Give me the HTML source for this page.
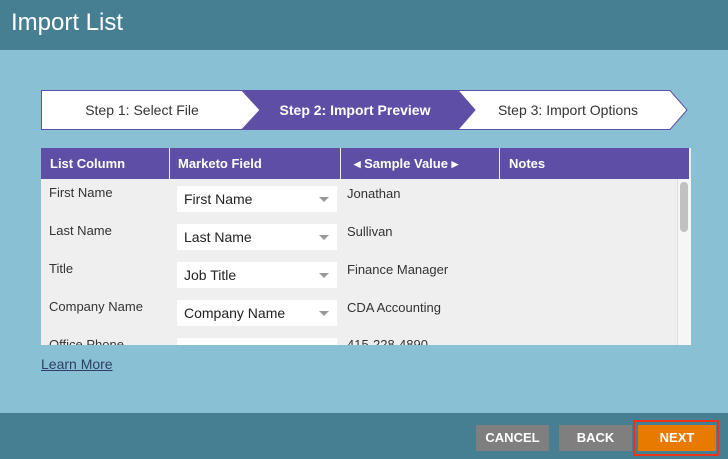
<!DOCTYPE html>
<html><head><style>
*{margin:0;padding:0;box-sizing:border-box}
body{width:728px;height:459px;background:#89c0d4;font-family:"Liberation Sans",sans-serif;position:relative;overflow:hidden}
.hdr{position:absolute;left:0;top:0;width:728px;height:50px;background:#477f92;color:#fff;font-size:24px;padding:9px 0 0 11px}
.ftr{position:absolute;left:0;top:413px;width:728px;height:46px;background:#477f92}
.tbl{position:absolute;left:41px;top:148px;width:650px;height:197px;background:#efefef;overflow:hidden}
.th{position:absolute;top:0;height:31px;background:#5e4ea6;color:#fff;font-size:13px;font-weight:bold;line-height:31px}
.cell{position:absolute;font-size:13px;color:#333}
.sel{position:absolute;left:136px;width:160px;height:26px;background:#fff;font-size:14px;color:#222;padding:5px 0 0 7px}
.sel:after{content:"";position:absolute;right:8px;top:11px;border-left:5px solid transparent;border-right:5px solid transparent;border-top:5px solid #999}
.btn{position:absolute;top:425px;height:26px;color:#fff;font-size:13px;font-weight:bold;text-align:center;line-height:26px}
</style></head><body>
<div class="hdr">Import List</div>
<svg style="position:absolute;left:0;top:0" width="728" height="140">
<polygon points="41.5,90.5 242,90.5 260,110 242,129.5 41.5,129.5" fill="#fff" stroke="#5e4ea6"/>
<polygon points="242,90 458,90 475,110 458,130 242,130 260,110" fill="#5e4ea6"/>
<polygon points="458,90.5 670,90.5 687,110 670,129.5 458,129.5 475,110" fill="#fff" stroke="#5e4ea6"/>
<text x="142" y="115" font-size="14" fill="#333" text-anchor="middle" font-family="Liberation Sans">Step 1: Select File</text>
<text x="355" y="115" font-size="14" fill="#fff" font-weight="bold" text-anchor="middle" font-family="Liberation Sans">Step 2: Import Preview</text>
<text x="568" y="115" font-size="14" fill="#333" text-anchor="middle" font-family="Liberation Sans">Step 3: Import Options</text>
</svg>
<div class="tbl">
<div class="th" style="left:0;width:128px;padding-left:9px">List Column</div>
<div class="th" style="left:129px;width:170px;padding-left:8px">Marketo Field</div>
<div class="th" style="left:300px;width:158px;padding-left:13px">◂ Sample Value ▸</div>
<div class="th" style="left:459px;width:189px;padding-left:9px">Notes</div>
<div style="position:absolute;left:636px;top:31px;width:14px;height:166px;background:#f6f6f6;border-left:1px solid #ddd"></div>
<div style="position:absolute;left:639px;top:34px;width:8px;height:50px;background:#c1c1c1;border-radius:4px"></div>
<div class="cell" style="left:8px;top:37px">First Name</div><div class="sel" style="top:38px">First Name</div><div class="cell" style="left:306px;top:38px">Jonathan</div>
<div class="cell" style="left:8px;top:75px">Last Name</div><div class="sel" style="top:76px">Last Name</div><div class="cell" style="left:306px;top:76px">Sullivan</div>
<div class="cell" style="left:8px;top:113px">Title</div><div class="sel" style="top:114px">Job Title</div><div class="cell" style="left:306px;top:114px">Finance Manager</div>
<div class="cell" style="left:8px;top:151px">Company Name</div><div class="sel" style="top:152px">Company Name</div><div class="cell" style="left:306px;top:152px">CDA Accounting</div>
<div class="cell" style="left:8px;top:189px">Office Phone</div><div class="sel" style="top:190px"></div><div class="cell" style="left:306px;top:189px">415-228-4890</div>
</div>
<div style="position:absolute;left:41px;top:356px;font-size:14px;color:#2e3e66;text-decoration:underline">Learn More</div>
<div class="ftr"></div>
<div class="btn" style="left:476px;width:73px;background:#7f7f7f">CANCEL</div>
<div class="btn" style="left:559px;width:73px;background:#7f7f7f">BACK</div>
<div style="position:absolute;left:633px;top:420px;width:86px;height:36px;border:2px solid #e8341c"></div>
<div class="btn" style="left:638px;width:78px;background:#e87a00">NEXT</div>
</body></html>
